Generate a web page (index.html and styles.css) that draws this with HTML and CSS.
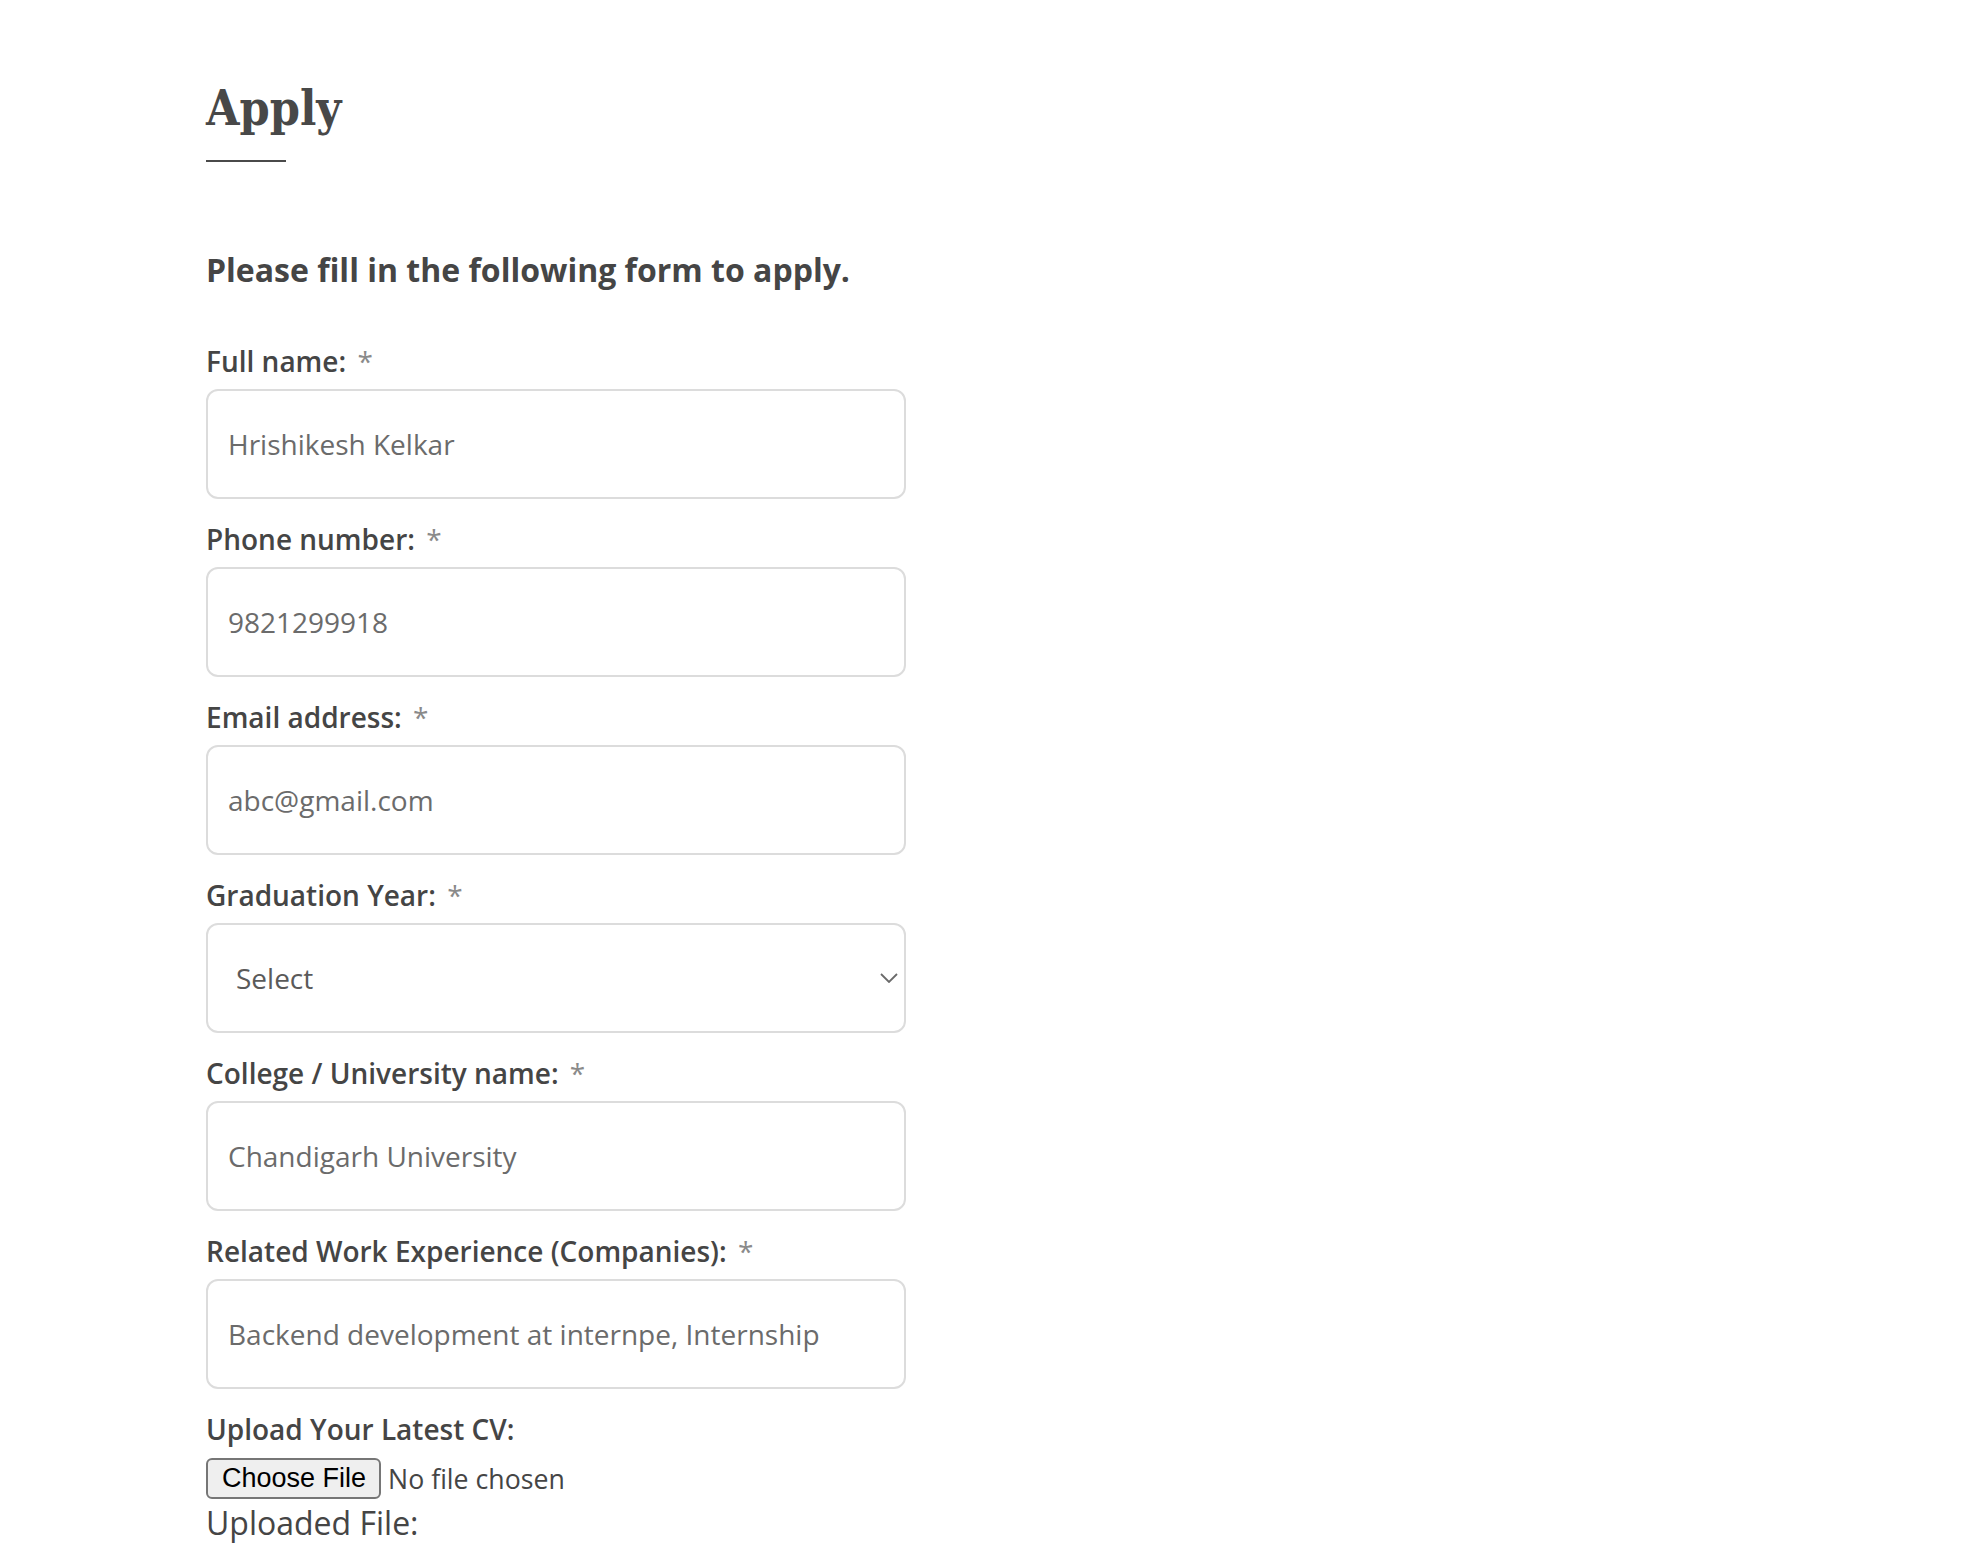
FILE: index.html
```html
<!DOCTYPE html>
<html lang="en">
<head>
<meta charset="utf-8">
<title>Apply</title>
<link rel="stylesheet" href="styles.css">
</head>
<body>
<main class="page">
  <h1 class="title">Apply</h1>
  <div class="title-rule"></div>
  <p class="intro">Please fill in the following form to apply.</p>
  <form class="form">
    <div class="field">
      <label class="label" for="name">Full name: <span class="req">*</span></label>
      <input class="input" id="name" type="text" value="Hrishikesh Kelkar">
    </div>
    <div class="field">
      <label class="label" for="phone">Phone number: <span class="req">*</span></label>
      <input class="input" id="phone" type="text" value="9821299918">
    </div>
    <div class="field">
      <label class="label" for="email">Email address: <span class="req">*</span></label>
      <input class="input" id="email" type="text" value="abc@gmail.com">
    </div>
    <div class="field">
      <label class="label" for="year">Graduation Year: <span class="req">*</span></label>
      <div class="select-wrap">
        <select class="input select" id="year">
          <option>Select</option>
        </select>
        <svg class="chevron" width="18" height="10" viewBox="0 0 18 10"><path d="M1 1 L9 9 L17 1" fill="none" stroke="#6a6a6a" stroke-width="1.8"/></svg>
      </div>
    </div>
    <div class="field">
      <label class="label" for="college">College / University name: <span class="req">*</span></label>
      <input class="input" id="college" type="text" value="Chandigarh University">
    </div>
    <div class="field">
      <label class="label" for="work">Related Work Experience (Companies): <span class="req">*</span></label>
      <input class="input" id="work" type="text" value="Backend development at internpe, Internship">
    </div>
    <div class="upload">
      <label class="label" for="cv">Upload Your Latest CV:</label>
      <div class="file-row">
        <span class="file-btn">Choose File</span>
        <span class="file-status">No file chosen</span>
        <input class="file" id="cv" type="file">
      </div>
      <div class="uploaded">Uploaded File:</div>
    </div>
  </form>
</main>
</body>
</html>
```

FILE: styles.css
```css
html, body {
  margin: 0;
  padding: 0;
  background: #ffffff;
}

body {
  font-family: "Open Sans", "Noto Sans", sans-serif;
  color: #454545;
}

.page {
  padding: 78px 0 0 206px;
}

.title {
  margin: 0;
  font-family: "DejaVu Serif Condensed", "DejaVu Serif", serif;
  font-stretch: condensed;
  font-weight: 700;
  font-size: 48px;
  line-height: 60px;
  color: #484848;
}

.title-rule {
  width: 80px;
  height: 2px;
  background: #4a4a4a;
  margin-top: 22px;
}

.intro {
  margin: 86px 0 0 0;
  font-size: 32px;
  line-height: 44px;
  font-weight: 700;
  color: #454545;
}

.form {
  margin-top: 49px;
  width: 700px;
  display: flex;
  flex-direction: column;
  gap: 20px;
}

.field {
  display: flex;
  flex-direction: column;
  gap: 8px;
}

.label {
  font-size: 28px;
  line-height: 40px;
  font-weight: 600;
  color: #454545;
}

.req {
  color: #8a8a8a;
  font-weight: 400;
  margin-left: 4px;
}

.input {
  box-sizing: border-box;
  width: 700px;
  height: 110px;
  border: 2px solid #dcdcdc;
  border-radius: 12px;
  padding: 0 20px;
  font-family: "Open Sans", "Noto Sans", sans-serif;
  font-size: 28px;
  color: #6b6b6b;
  background: #ffffff;
  outline: none;
}

.select-wrap {
  position: relative;
  width: 700px;
}

.select {
  -webkit-appearance: none;
  appearance: none;
  padding-left: 28px;
  color: #5a5a5a;
  display: block;
}

.chevron {
  position: absolute;
  right: 8px;
  top: 50px;
  pointer-events: none;
}

.upload {
  display: flex;
  flex-direction: column;
}

.file-row {
  position: relative;
  margin-top: 9px;
  display: flex;
  align-items: center;
  gap: 7px;
  height: 41px;
}

.file-btn {
  box-sizing: border-box;
  height: 41px;
  display: flex;
  align-items: center;
  font-family: "Liberation Sans", Arial, sans-serif;
  font-size: 27px;
  color: #000000;
  background: #efefef;
  border: 2px solid #767676;
  border-radius: 6px;
  padding: 0 13px 0 14px;
}

.file-status {
  font-size: 26.7px;
  color: #454545;
}

.file {
  position: absolute;
  left: 0;
  top: 0;
  width: 100%;
  height: 100%;
  opacity: 0;
  cursor: pointer;
}

.uploaded {
  margin-top: 2px;
  font-size: 32px;
  line-height: 44px;
  color: #454545;
}
```
